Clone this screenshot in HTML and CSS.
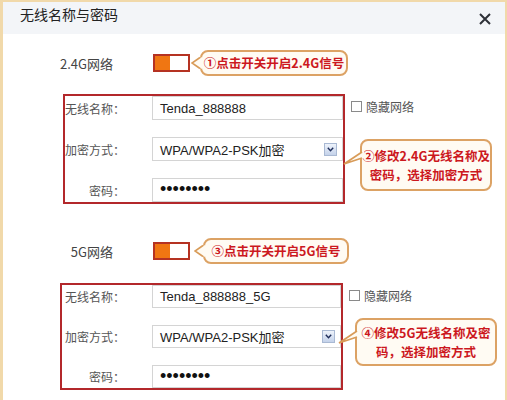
FILE: index.html
```html
<!DOCTYPE html>
<html lang="zh-CN">
<head>
<meta charset="utf-8">
<title>无线名称与密码</title>
<link rel="stylesheet" href="styles.css">
</head>
<body>
<div class="dialog">
  <div class="header">
    <span class="title">无线名称与密码</span>
    <svg class="close" width="12" height="12" viewBox="0 0 12 12"><path d="M1 1 L11 11 M11 1 L1 11" stroke="#2e3138" stroke-width="2" fill="none"/></svg>
  </div>

  <section class="band">
    <div class="net-row">
      <span class="net-label">2.4G网络</span>
      <span class="toggle"></span>
      <div class="callout callout-row">
        <svg class="tail-row" width="11" height="14" viewBox="0 0 11 14"><path d="M11,1 L1,7 L11,13 Z" fill="#fffbf3"/><path d="M9,1.5 L1,7 L9,12.5" fill="none" stroke="#d89b58" stroke-width="1.6"/></svg>
        ①点击开关开启2.4G信号
      </div>
    </div>
    <div class="form-row">
      <div class="form-box">
        <div class="field"><span class="flabel">无线名称：</span><div class="input">Tenda_888888</div></div>
        <div class="field"><span class="flabel">加密方式：</span><div class="input select"><span>WPA/WPA2-PSK加密</span><span class="arrow"><svg width="7" height="5" viewBox="0 0 7 5"><path d="M0.8 0.8 L3.5 3.8 L6.2 0.8" stroke="#1f2d5a" stroke-width="1.4" fill="none"/></svg></span></div></div>
        <div class="field"><span class="flabel">密码：</span><div class="input dots">••••••••</div></div>
      </div>
      <div class="side">
        <div class="check"><span class="cbox"></span>隐藏网络</div>
        <div class="callout callout-side c2">
          <svg class="tail-side" width="21" height="18" viewBox="0 0 21 18"><path d="M21,3 L1,16 L21,10 Z" fill="#fffbf3"/><path d="M19,4 L1,16 L19,10" fill="none" stroke="#d89b58" stroke-width="1.6"/></svg>
          ②修改2.4G无线名称及<br>密码，选择加密方式
        </div>
      </div>
    </div>
  </section>

  <section class="band band-5g">
    <div class="net-row">
      <span class="net-label">5G网络</span>
      <span class="toggle"></span>
      <div class="callout callout-row c3">
        <svg class="tail-row" width="11" height="14" viewBox="0 0 11 14"><path d="M11,1 L1,7 L11,13 Z" fill="#fffbf3"/><path d="M9,1.5 L1,7 L9,12.5" fill="none" stroke="#d89b58" stroke-width="1.6"/></svg>
        ③点击开关开启5G信号
      </div>
    </div>
    <div class="form-row">
      <div class="form-box box-5g">
        <div class="field"><span class="flabel">无线名称：</span><div class="input">Tenda_888888_5G</div></div>
        <div class="field"><span class="flabel">加密方式：</span><div class="input select"><span>WPA/WPA2-PSK加密</span><span class="arrow"><svg width="7" height="5" viewBox="0 0 7 5"><path d="M0.8 0.8 L3.5 3.8 L6.2 0.8" stroke="#1f2d5a" stroke-width="1.4" fill="none"/></svg></span></div></div>
        <div class="field"><span class="flabel">密码：</span><div class="input dots">••••••••</div></div>
      </div>
      <div class="side side-5g">
        <div class="check"><span class="cbox"></span>隐藏网络</div>
        <div class="callout callout-side c4">
          <svg class="tail-side" width="21" height="18" viewBox="0 0 21 18"><path d="M21,3 L1,16 L21,10 Z" fill="#fffbf3"/><path d="M19,4 L1,16 L19,10" fill="none" stroke="#d89b58" stroke-width="1.6"/></svg>
          ④修改5G无线名称及密<br>码，选择加密方式
        </div>
      </div>
    </div>
  </section>
</div>
</body>
</html>
```
FILE: styles.css
```css
* { box-sizing: border-box; }
html, body { margin: 0; padding: 0; background: #fff; }
body {
  width: 507px;
  height: 400px;
  overflow: hidden;
  font-family: "Noto Sans CJK SC", "Liberation Sans", sans-serif;
}
.dialog {
  width: 507px;
  height: 400px;
  border-top: 2px solid #f1d9aa;
  border-left: 3px solid #f1d9aa;
  border-right: 2px solid #f1d9aa;
  background: #fff;
}
.header {
  height: 32px;
  background: #f3f5f8;
  display: flex;
  justify-content: space-between;
  align-items: flex-start;
  padding: 3px 14px 0 17px;
}
.title {
  font-size: 14px;
  line-height: 18px;
  color: #222;
}
.close { margin-top: 8px; }

.net-row {
  display: flex;
  align-items: center;
  margin-top: 16px;
}
.band-5g .net-row { margin-top: 34px; }
.net-label {
  width: 110px;
  text-align: right;
  font-size: 13px;
  color: #444;
}
.toggle {
  width: 37px;
  height: 18px;
  margin-left: 40px;
  border: 2px solid #b53222;
  background: linear-gradient(to right, #f07612 0, #f07612 46%, #fff 46%);
}

.callout {
  position: relative;
  border: 2px solid #dca264;
  border-radius: 8px;
  background: #fffbf3;
  color: #cc181e;
  font-weight: 700;
  font-size: 12.5px;
  text-align: center;
  white-space: nowrap;
}
.callout-row {
  width: 148px;
  height: 26px;
  line-height: 22px;
  margin-left: 10px;
}
.c3 { width: 146px; margin-left: 13px; }
.tail-row { position: absolute; left: -11px; top: 4px; }

.form-row {
  display: flex;
  align-items: flex-start;
  margin-top: 18px;
}
.band-5g .form-row { margin-top: 19px; }
.form-box {
  width: 282px;
  margin-left: 60px;
  border: 2px solid #b3282b;
  display: flex;
  flex-direction: column;
  gap: 17px;
}
.box-5g {
  margin-left: 57px;
  width: 283px;
  padding-left: 3px;
}
.field {
  display: flex;
  align-items: center;
  height: 24px;
}
.box-5g .field { height: 23px; }
.box-5g .input { height: 23px; }
.flabel {
  width: 60px;
  text-align: right;
  font-size: 12px;
  color: #555;
}
.input {
  flex: 1;
  height: 24px;
  margin-left: 27px;
  border: 1px solid #d4d4d4;
  display: flex;
  align-items: center;
  padding-left: 7px;
  font-family: "Liberation Sans", "Noto Sans CJK SC", sans-serif;
  font-size: 13px;
  color: #222;
}
.arrow {
  margin-left: auto;
  margin-right: 5px;
  width: 13px;
  height: 13px;
  border: 1px solid #a9b9d3;
  background: linear-gradient(#eef3fb, #c4d2ea);
  display: flex;
  align-items: center;
  justify-content: center;
}
.dots {
  font-size: 18px;
  color: #111;
  padding-bottom: 1px;
}

.side {
  display: flex;
  flex-direction: column;
  align-items: flex-start;
  margin-left: 6px;
}
.side-5g { margin-left: 6px; }
.check {
  height: 24px;
  display: flex;
  align-items: center;
  font-size: 12px;
  color: #555;
}
.cbox {
  width: 11px;
  height: 11px;
  border: 1px solid #8a8a8a;
  background: #fff;
  margin-right: 4px;
}
.callout-side {
  line-height: 19px;
  padding: 5px 0;
}
.c2 { width: 132px; margin-left: 9px; margin-top: 21px; }
.c4 { width: 142px; margin-left: 6px; margin-top: 11px; padding: 3px 0; }
.tail-side { position: absolute; left: -19px; top: 7px; }
```
